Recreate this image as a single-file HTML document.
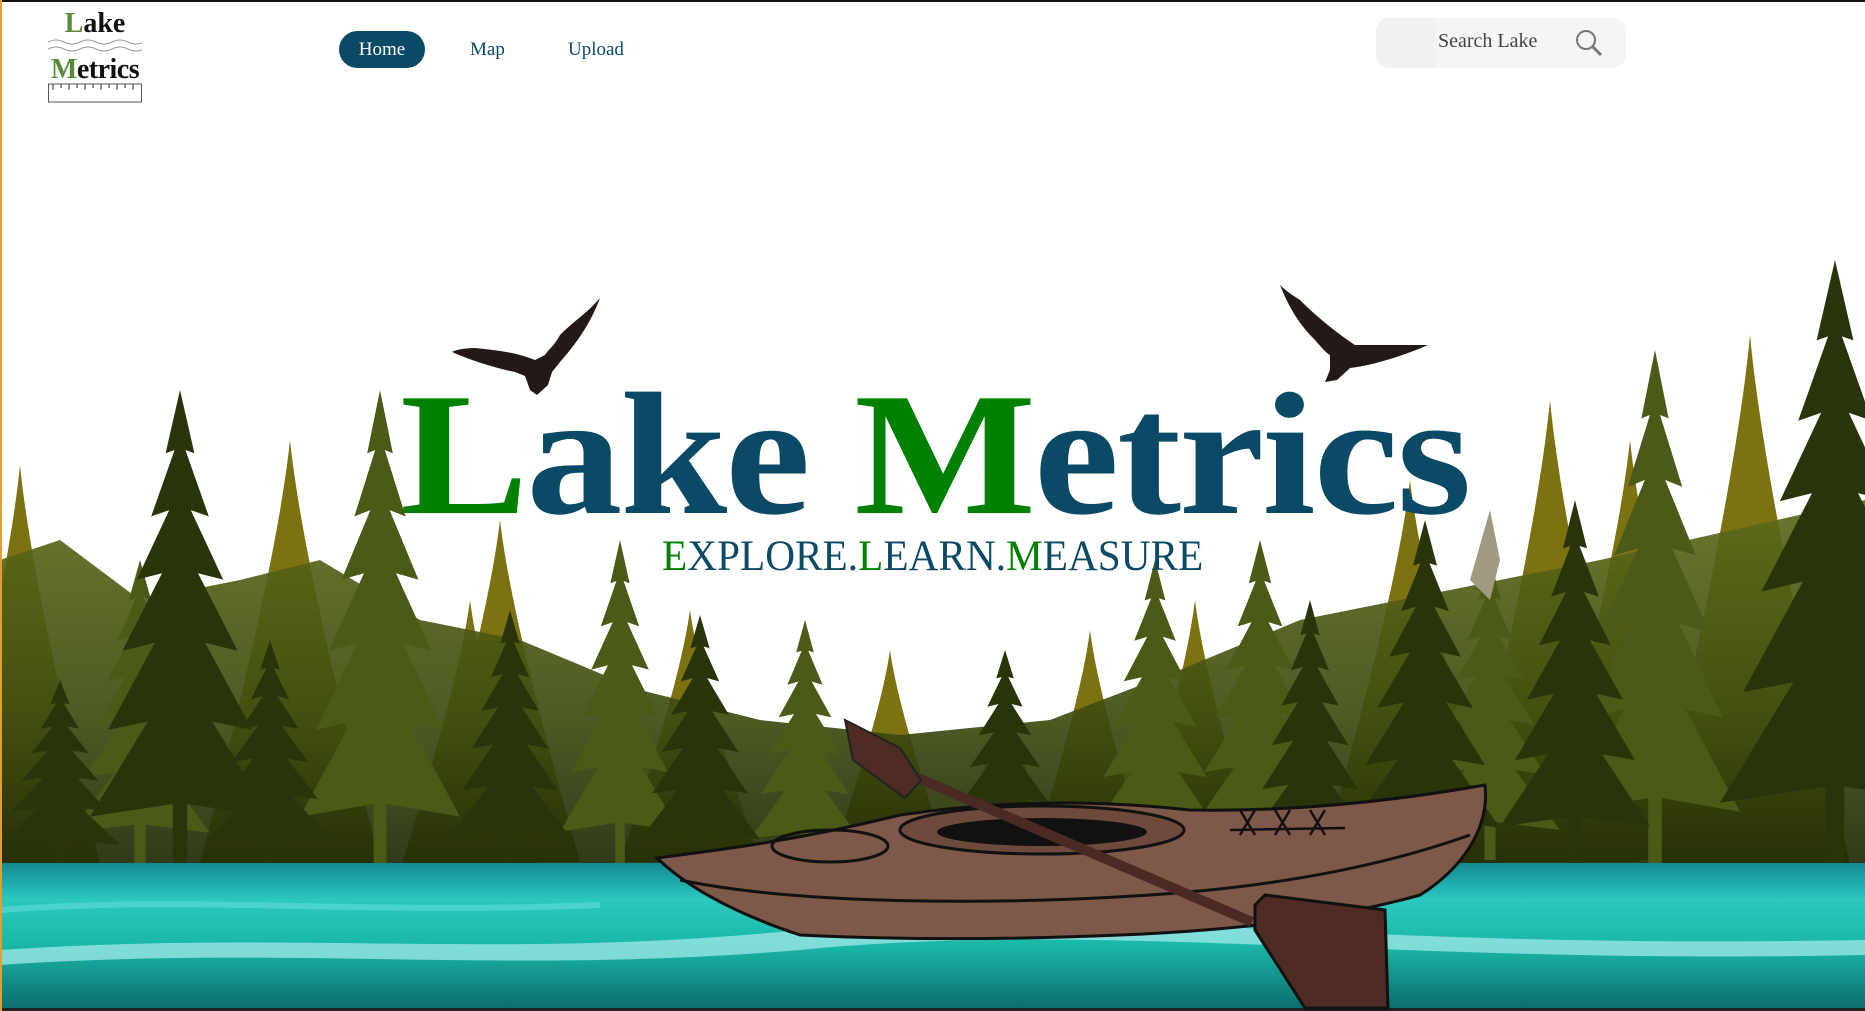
<!DOCTYPE html>
<html><head><meta charset="utf-8"><style>
html,body{margin:0;padding:0;width:1865px;height:1011px;overflow:hidden;background:#fff;font-family:"Liberation Serif",serif}
.top{position:absolute;left:0;top:0;width:1865px;height:2px;background:#111}
.lborder{position:absolute;left:0;top:0;width:2px;height:1011px;background:#e0a030}
.logo{position:absolute;left:48px;top:10px;width:94px;text-align:center;font-weight:bold;color:#111}
.logo .g{color:#5a8a3a}
.nav a{position:absolute;top:31px;height:37px;line-height:37px;font-size:19px;color:#0a4a66;text-decoration:none}
.home{left:339px;width:86px;background:#0a4a66;color:#fff!important;border-radius:19px;text-align:center}
.search{position:absolute;left:1376px;top:18px;width:250px;height:50px;border-radius:13px;background:#f5f5f5}
.search .l{position:absolute;left:0;top:0;width:60px;height:50px;background:#f1f1f1;border-radius:13px 0 0 13px}
.search span{position:absolute;left:62px;top:12px;font-size:20px;color:#444}
svg.scene{position:absolute;left:0;top:0}
.title{position:absolute;left:400px;top:367px;font-size:175px;font-weight:bold;color:#0a4a66;line-height:1;white-space:nowrap;letter-spacing:-2px;transform:scaleX(1.1);transform-origin:left}
.title .g,.sub .g{color:#008000}
.sub{position:absolute;left:662px;top:532px;font-size:43px;color:#0a4a66;white-space:nowrap;transform:scaleX(0.96);transform-origin:left}
</style></head><body>
<svg class="scene" width="1865" height="1011" viewBox="0 0 1865 1011">
<defs>
<path id="pine" d="M50 0 L58 40 L53 38 L66 80 L56 76 L74 120 L60 116 L82 165 L64 160 L90 215 L68 210 L100 270 L54 262 L54 300 L46 300 L46 262 L0 270 L32 210 L10 215 L36 160 L18 165 L40 116 L26 120 L44 76 L34 80 L47 38 L42 40 Z"/>
<path id="cone" d="M50 0 C55 60 70 150 100 300 L0 300 C30 150 45 60 50 0 Z"/>
<linearGradient id="ground" x1="0" y1="0" x2="0" y2="1"><stop offset="0" stop-color="#5e6a1a"/><stop offset="0.6" stop-color="#3e4c10"/><stop offset="1" stop-color="#1f2a06"/></linearGradient>
<linearGradient id="water" x1="0" y1="0" x2="0" y2="1"><stop offset="0" stop-color="#138a92"/><stop offset="0.25" stop-color="#2cc8c0"/><stop offset="0.55" stop-color="#1ab8a8"/><stop offset="1" stop-color="#0c6a6c"/></linearGradient>
</defs>
<g fill="#7d7212">
<use href="#cone" transform="translate(-60,465) scale(1.6,1.33)"/>
<use href="#cone" transform="translate(200,440) scale(1.8,1.41)"/>
<use href="#cone" transform="translate(420,520) scale(1.6,1.14)"/>
<use href="#cone" transform="translate(400,600) scale(1.4,0.9)"/>
<use href="#cone" transform="translate(620,610) scale(1.4,0.84)"/>
<use href="#cone" transform="translate(830,650) scale(1.2,0.71)"/>
<use href="#cone" transform="translate(950,690) scale(1.1,0.58)"/>
<use href="#cone" transform="translate(1030,630) scale(1.2,0.78)"/>
<use href="#cone" transform="translate(1130,600) scale(1.3,0.88)"/>
<use href="#cone" transform="translate(1320,480) scale(1.8,1.28)"/>
<use href="#cone" transform="translate(1460,400) scale(1.8,1.54)"/>
<use href="#cone" transform="translate(1650,335) scale(2.0,1.76)"/>
<use href="#cone" transform="translate(1540,440) scale(1.8,1.4)"/>
</g>
<path d="M0 560 L60 540 L140 600 L240 580 L320 560 L420 620 L520 640 L640 690 L760 720 L900 735 L1050 720 L1180 670 L1300 620 L1400 600 L1500 580 L1600 560 L1865 500 L1865 863 L0 863Z" fill="url(#ground)" opacity="0.92"/>
<g fill="#4b5a17">
<use href="#pine" transform="translate(300,390) scale(1.6,1.58)"/>
<use href="#pine" transform="translate(560,540) scale(1.2,1.08)"/>
<use href="#pine" transform="translate(750,620) scale(1.1,0.81)"/>
<use href="#pine" transform="translate(1090,560) scale(1.3,1.01)"/>
<use href="#pine" transform="translate(1190,540) scale(1.4,1.08)"/>
<use href="#pine" transform="translate(1570,350) scale(1.7,1.71)"/>
<use href="#pine" transform="translate(70,560) scale(1.4,1.01)"/>
<use href="#pine" transform="translate(1420,560) scale(1.4,1.0)"/>
</g>
<path d="M1490 510 L1500 560 L1490 600 L1470 580Z" fill="#a09a80"/>
<g fill="#2a340b">
<use href="#pine" transform="translate(90,390) scale(1.8,1.58)"/>
<use href="#pine" transform="translate(450,610) scale(1.2,0.84)"/>
<use href="#pine" transform="translate(640,615) scale(1.2,0.83)"/>
<use href="#pine" transform="translate(1250,600) scale(1.2,0.88)"/>
<use href="#pine" transform="translate(1350,520) scale(1.5,1.14)"/>
<use href="#pine" transform="translate(1500,500) scale(1.5,1.21)"/>
<use href="#pine" transform="translate(1720,260) scale(2.3,2.01)"/>
<use href="#pine" transform="translate(950,650) scale(1.1,0.71)"/>
<use href="#pine" transform="translate(210,640) scale(1.2,0.74)"/>
<use href="#pine" transform="translate(0,680) scale(1.2,0.61)"/>
</g>
<rect x="0" y="863" width="1865" height="148" fill="url(#water)"/>
<path d="M0 910 C200 895 350 915 600 905" stroke="#5ad8d4" stroke-width="6" fill="none" opacity="0.7"/>
<path d="M0 950 C300 930 500 960 800 930 C1100 900 1300 950 1865 940 L1865 955 C1400 965 1100 920 800 950 C500 975 300 945 0 965Z" fill="#9ae6e6" opacity="0.8"/>
<rect x="0" y="1008" width="1865" height="3" fill="#222"/>
<g fill="#231a18">
<path d="M600 298 C585 315 575 320 560 335 C555 345 548 350 545 355 L535 360 C515 352 495 350 475 348 C465 348 455 350 452 352 C470 360 495 368 515 372 L525 376 L530 390 L537 395 L548 385 L552 372 L560 362 C575 345 590 325 600 298Z"/>
<path d="M1280 285 C1290 310 1300 325 1315 340 C1322 348 1325 352 1330 355 L1330 370 L1325 382 L1337 380 L1350 368 C1375 365 1405 355 1428 345 C1410 345 1390 345 1370 345 L1355 345 C1340 335 1320 320 1300 300 C1292 295 1285 290 1280 285Z"/>
</g>
<path d="M657 858 C720 850 800 840 900 815 C1000 800 1100 800 1190 810 C1300 812 1400 800 1485 785 C1490 830 1460 870 1420 895 C1350 915 1250 930 1120 935 C1000 940 900 940 800 935 C740 915 690 890 657 858Z" fill="#7e5848" stroke="#111" stroke-width="3"/>
<path d="M680 880 C800 905 1000 905 1150 895 C1300 885 1400 860 1470 835" fill="none" stroke="#111" stroke-width="3"/>
<ellipse cx="830" cy="846" rx="58" ry="16" fill="none" stroke="#111" stroke-width="3"/>
<ellipse cx="1042" cy="830" rx="142" ry="24" fill="#6e4a3c" stroke="#111" stroke-width="3"/>
<ellipse cx="1042" cy="832" rx="105" ry="14" fill="#111"/>
<path d="M1240 810 L1255 835 M1255 810 L1240 835 M1275 810 L1290 835 M1290 810 L1275 835 M1310 810 L1325 835 M1325 810 L1310 835 M1230 830 L1345 828" stroke="#111" stroke-width="2.5" fill="none"/>
<path d="M918 778 L1252 922" stroke="#4a2a22" stroke-width="10"/>
<path d="M845 720 L900 748 L921 780 L905 798 L853 760Z" fill="#4e2b23" stroke="#222" stroke-width="2"/>
<path d="M1255 905 L1265 895 L1385 910 L1388 1008 L1305 1008 L1255 930Z" fill="#4e2b23" stroke="#111" stroke-width="3"/>
</svg>
<div class="top"></div><div class="lborder"></div>
<div class="logo">
<div style="font-size:28px;line-height:28px"><span class="g">L</span>ake</div>
<svg width="94" height="14"><path d="M0 4 Q8 0 16 4 T32 4 T48 4 T64 4 T80 4 T96 4 M0 11 Q8 7 16 11 T32 11 T48 11 T64 11 T80 11 T96 11" fill="none" stroke="#999" stroke-width="1"/></svg>
<div style="font-size:28px;line-height:26px;letter-spacing:-0.5px"><span class="g">M</span>etrics</div>
<svg width="94" height="20"><rect x="0.5" y="1" width="93" height="18" fill="#fff" stroke="#555"/><path d="M5 1v6M13 1v4M21 1v6M29 1v4M37 1v6M45 1v4M53 1v6M61 1v4M69 1v6M77 1v4M85 1v6" stroke="#333"/></svg>
</div>
<div class="nav"><a class="home">Home</a><a style="left:470px">Map</a><a style="left:568px">Upload</a></div>
<div class="search"><div class="l"></div><span>Search Lake</span>
<svg style="position:absolute;left:198px;top:10px" width="30" height="30"><circle cx="12" cy="12" r="9" fill="none" stroke="#777" stroke-width="2"/><path d="M19 19 L27 27" stroke="#777" stroke-width="3"/></svg></div>
<div class="title"><span class="g">L</span>ake <span class="g">M</span>etrics</div>
<div class="sub"><span class="g">E</span>XPLORE.<span class="g">L</span>EARN.<span class="g">M</span>EASURE</div>
</body></html>
